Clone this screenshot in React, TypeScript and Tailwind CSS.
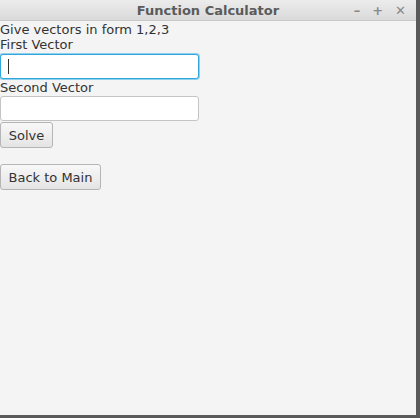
import React from 'react';

export default function App() {
  const font = { fontFamily: '"DejaVu Sans", "Liberation Sans", sans-serif' };
  return (
    <div className="w-[420px] h-[418px] bg-[#5a5a5a] flex flex-col" style={font}>
      <div className="h-[21px] w-[416px] bg-gradient-to-b from-[#ececec] to-[#dadada] border-b border-[#c8c8c8] flex items-center relative">
        <span className="w-full text-center text-[13px] font-bold text-[#5b5b5b] leading-none">Function Calculator</span>
        <div className="absolute right-[10px] top-[4px] flex items-center gap-[12px] text-[#8a8a8a] text-[13px] font-bold leading-none">
          <span>–</span>
          <span>+</span>
          <span>✕</span>
        </div>
      </div>
      <div className="w-[416px] h-[394px] bg-[#f4f4f4] flex flex-col items-start text-[13px] text-[#333] leading-[15px]">
        <div className="mt-[1px]">Give vectors in form 1,2,3</div>
        <div>First Vector</div>
        <div className="mt-[2px] w-[199px] h-[25px] bg-white rounded-[3px] border border-[#2fa7dc] shadow-[0_0_0_1px_#8fd0ef] flex items-center pl-[7px]">
          <div className="w-[1px] h-[15px] bg-[#333]"></div>
        </div>
        <div className="mt-[1px]">Second Vector</div>
        <div className="mt-[1px] w-[199px] h-[25px] bg-white rounded-[3px] border border-[#c4c4c4]"></div>
        <button className="mt-[1px] h-[26px] w-[53px] rounded-[3px] border border-[#b5b5b5] bg-gradient-to-b from-[#f8f8f8] to-[#e4e4e4] text-[#333] text-[13px]">Solve</button>
        <button className="mt-[16px] h-[26px] w-[101px] rounded-[3px] border border-[#b5b5b5] bg-gradient-to-b from-[#f8f8f8] to-[#e4e4e4] text-[#333] text-[13px]">Back to Main</button>
      </div>
    </div>
  );
}
